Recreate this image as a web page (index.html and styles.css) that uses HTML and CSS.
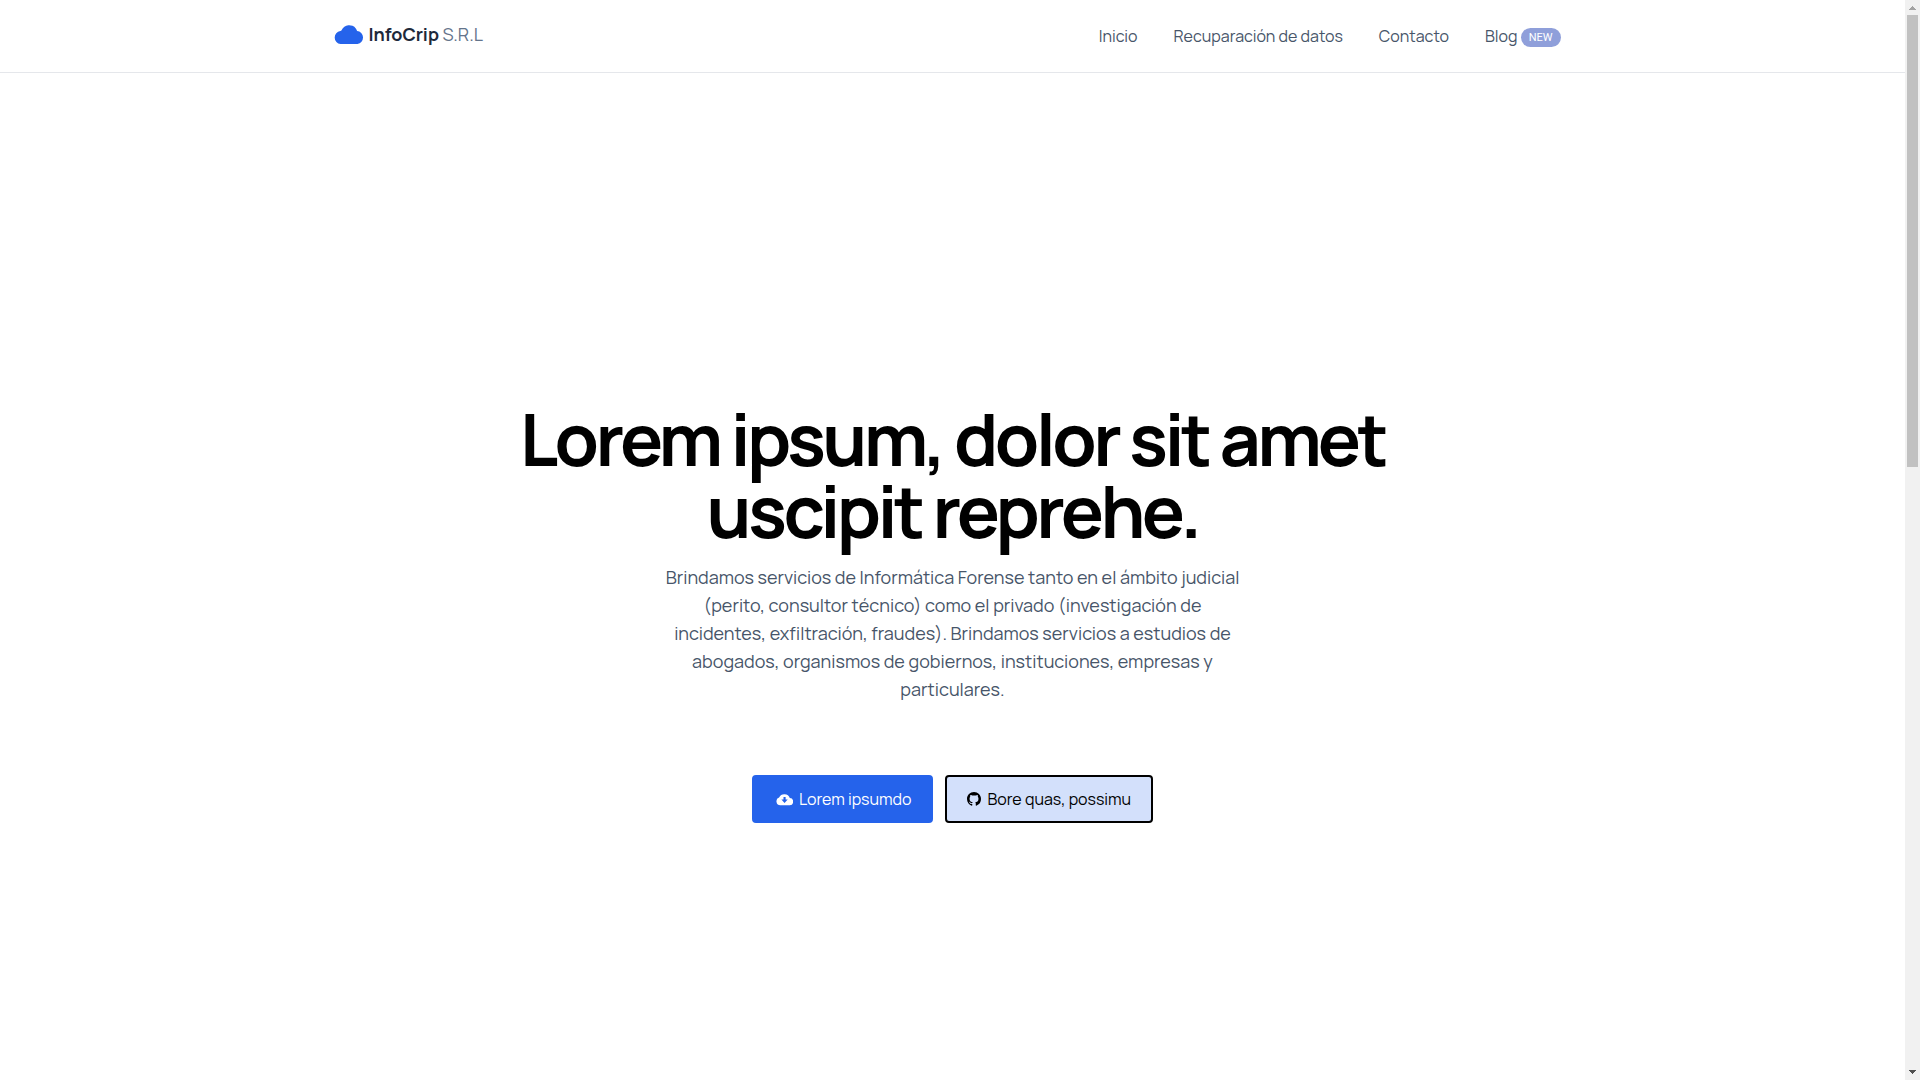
FILE: index.html
```html
<!DOCTYPE html>
<html lang="es">
<head>
<meta charset="utf-8">
<meta name="viewport" content="width=device-width, initial-scale=1">
<title>InfoCrip S.R.L</title>
<link rel="stylesheet" href="styles.css">
</head>
<body>
<div class="page">
  <header class="header">
    <div class="header-inner">
      <a class="brand" href="#">
        <svg class="brand-icon" viewBox="0 0 30 20" aria-hidden="true"><path fill="currentColor" d="M6.500 20A6.500 6.500 0 0 1 6.300 7.100Q7.300 6.900 7.700 6A8.200 8.200 0 0 1 21.800 4.500Q22.700 5.700 23.100 7.100A6.500 6.500 0 0 1 23.500 20Z"/></svg>
        <span><strong>InfoCrip</strong> S.R.L</span>
      </a>
      <nav class="nav">
        <a href="#">Inicio</a>
        <a href="#">Recuparación de datos</a>
        <a href="#">Contacto</a>
        <a href="#">Blog <span class="badge">NEW</span></a>
      </nav>
    </div>
  </header>
  <main class="hero">
    <h1 class="title">Lorem ipsum, dolor sit amet uscipit reprehe.</h1>
    <p class="lead">Brindamos servicios de Informática Forense tanto en el ámbito judicial (perito, consultor técnico) como el privado (investigación de incidentes, exfiltración, fraudes). Brindamos servicios a estudios de abogados, organismos de gobiernos, instituciones, empresas y particulares.</p>
    <div class="actions">
      <button class="button primary" type="button">
        <svg class="cloud" viewBox="-3 0 27 18" aria-hidden="true"><path fill="currentColor" fill-rule="evenodd" d="M6 17A5.500 5.500 0 0 1 4.200 6.300A8.200 8.200 0 0 1 19.500 7A5 5 0 0 1 19 17ZM10.500 5.500V9H7.500L12 14L16.500 9H13.500V5.500Z"/></svg>
        Lorem ipsumdo
      </button>
      <button class="button outline" type="button">
        <svg class="github" viewBox="0 0 16 16" aria-hidden="true"><path fill="currentColor" d="M8 0C3.580 0 0 3.580 0 8c0 3.540 2.290 6.530 5.470 7.590.4.070.55-.17.55-.38 0-.19-.01-.82-.01-1.490-2.010.37-2.530-.49-2.690-.94-.09-.23-.48-.94-.82-1.130-.28-.15-.68-.52-.01-.53.63-.01 1.080.58 1.230.82.72 1.210 1.870.87 2.330.66.07-.52.28-.87.51-1.070-1.780-.2-3.640-.89-3.640-3.950 0-.87.31-1.590.82-2.150-.08-.2-.36-1.020.08-2.120 0 0 .67-.21 2.200.82.64-.18 1.320-.27 2-.27s1.360.09 2 .27c1.530-1.040 2.200-.82 2.200-.82.44 1.100.16 1.920.08 2.120.51.56.82 1.270.82 2.150 0 3.070-1.870 3.750-3.650 3.950.29.25.54.73.54 1.480 0 1.070-.01 1.930-.01 2.200 0 .21.15.46.55.38A8.010 8.010 0 0 0 16 8c0-4.420-3.580-8-8-8Z"/></svg>
        Bore quas, possimu
      </button>
    </div>
  </main>
</div>
<div class="scrollbar" aria-hidden="true">
  <svg class="arrow up" viewBox="0 0 7 4"><path fill="currentColor" d="M3 0h1v1h1v1h1v1h1v1H0V3h1V2h1V1h1Z"/></svg>
  <div class="track"><div class="thumb"></div></div>
  <svg class="arrow down" viewBox="0 0 7 4"><path fill="currentColor" d="M0 0h7v1H6v1H5v1H4v1H3V3H2V2H1V1H0Z"/></svg>
</div>
</body>
</html>
```
FILE: styles.css
```css
* { box-sizing: border-box; }

body {
  margin: 0;
  height: 100vh;
  display: flex;
  overflow: hidden;
  background: #fff;
  color: #475569;
  font-family: Manrope, Inter, "Liberation Sans", sans-serif;
  font-size: 16px;
  line-height: 24px;
}

a { color: inherit; text-decoration: none; }

.page { flex: 1; min-width: 0; overflow: hidden; }

.header { border-bottom: 1px solid #e5e7eb; }

.header-inner {
  display: flex;
  align-items: center;
  justify-content: space-between;
  max-width: 1280px;
  min-height: 72px;
  margin: 0 auto;
  padding: 0 32px 0 20px;
}

.brand {
  display: flex;
  align-items: center;
  gap: 4px;
  padding-bottom: 4px;
  color: #64748b;
  font-size: 18px;
  font-weight: 400;
}
.brand strong { color: #1e293b; font-weight: 700; }
.brand-icon { width: 32px; height: 20px; color: #2563eb; }

.nav { display: flex; gap: 36px; }

.badge {
  display: inline-block;
  padding: 0 8px;
  border-radius: 10px;
  background: #8f9fda;
  color: #fff;
  font-family: Roboto, sans-serif;
  font-size: 11px;
  line-height: 19px;
  vertical-align: 1px;
}

.hero {
  display: flex;
  flex-direction: column;
  align-items: center;
  justify-content: center;
  min-height: 100vh;
  text-align: center;
}

.title {
  max-width: 900px;
  margin: 0;
  color: #000;
  font-size: 72px;
  font-weight: 700;
  letter-spacing: -0.05em;
  line-height: 72px;
}

.lead {
  max-width: 576px;
  margin: 16px 0 72px;
  font-size: 18px;
  line-height: 28px;
}

.actions { display: flex; gap: 12px; }

.button {
  display: flex;
  align-items: center;
  gap: 6px;
  min-height: 48px;
  padding: 0 20px;
  border: 2px solid #2563eb;
  border-radius: 4px;
  background: #2563eb;
  color: #fff;
  font: inherit;
}
.outline { border-color: #000; background: #d3e0fb; color: #000; }
.cloud { width: 19px; height: 13px; }
.github { width: 14px; height: 14px; }

.scrollbar {
  display: flex;
  flex-direction: column;
  align-items: center;
  width: 15px;
  padding: 6px 0;
  background: #f1f1f1;
}
.arrow { width: 7px; height: 4px; }
.up { color: #a3a3a3; }
.down { color: #505050; }
.track { flex: 1; align-self: stretch; padding: 5px 2px; }
.thumb { height: 43%; background: #c1c1c1; }
```
